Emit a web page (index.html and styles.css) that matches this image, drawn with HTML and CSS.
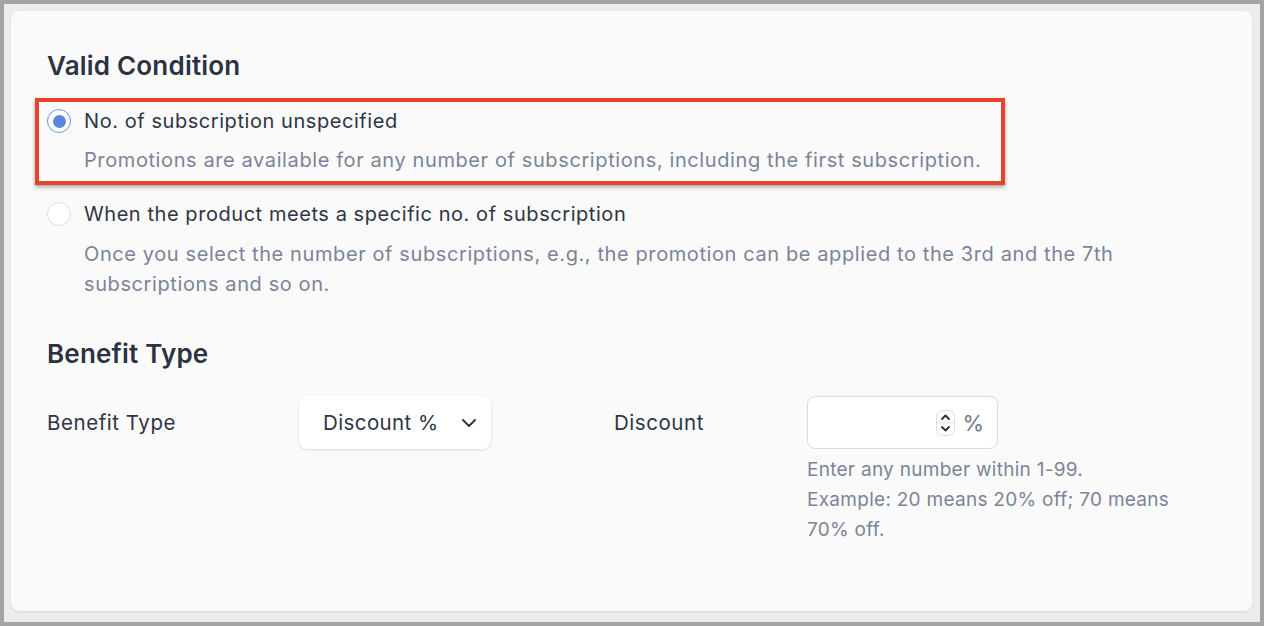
FILE: index.html
```html
<!DOCTYPE html>
<html lang="en">
<head>
<meta charset="utf-8">
<title>Promotion settings</title>
<link rel="stylesheet" href="styles.css">
</head>
<body>
<div class="frame">
  <div class="card">
    <h2 class="section-title">Valid Condition</h2>

    <div class="option option-first">
      <div class="option-row">
        <span class="radio radio-checked"><span class="radio-dot"></span></span>
        <span class="option-label">No. of subscription unspecified</span>
      </div>
      <p class="option-desc">Promotions are available for any number of subscriptions, including the first subscription.</p>
      <div class="highlight"></div>
    </div>

    <div class="option option-second">
      <div class="option-row">
        <span class="radio"></span>
        <span class="option-label">When the product meets a specific no. of subscription</span>
      </div>
      <p class="option-desc">Once you select the number of subscriptions, e.g., the promotion can be applied to the 3rd and the 7th subscriptions and so on.</p>
    </div>

    <h2 class="section-title section-title-2">Benefit Type</h2>

    <div class="benefit-row">
      <div class="field-label label-col">Benefit Type</div>
      <div class="select">
        <span class="select-value">Discount %</span>
        <svg class="chevron" width="14" height="8" viewBox="0 0 14 8"><path d="M1 1l6 6 6-6" fill="none" stroke="#343a4a" stroke-width="2" stroke-linecap="round" stroke-linejoin="round"/></svg>
      </div>
      <div class="field-label discount-label">Discount</div>
      <div class="discount-col">
        <div class="number-input">
          <input class="number-field" type="text" aria-label="Discount">
          <span class="spinner">
            <svg width="19" height="26" viewBox="0 0 19 26">
              <rect x="0.5" y="0.5" width="18" height="25" rx="6" fill="#fff" stroke="#d9dde4"/>
              <line x1="1" y1="13" x2="18" y2="13" stroke="#e2e5ea"/>
              <path d="M6 9l3.5-3.5L13 9" fill="none" stroke="#2a2f3b" stroke-width="1.8" stroke-linecap="round" stroke-linejoin="round"/>
              <path d="M6 17l3.5 3.5L13 17" fill="none" stroke="#2a2f3b" stroke-width="1.8" stroke-linecap="round" stroke-linejoin="round"/>
            </svg>
          </span>
          <span class="suffix">%</span>
        </div>
        <p class="help">Enter any number within 1-99.<br>Example: 20 means 20% off; 70 means 70% off.</p>
      </div>
    </div>
  </div>
</div>
</body>
</html>
```

FILE: styles.css
```css
* { box-sizing: border-box; }

html, body {
  margin: 0;
  padding: 0;
}

body {
  background: #a4a4a4;
  padding: 4px;
  font-family: "Inter", "Noto Sans", "Liberation Sans", sans-serif;
  color: #2f3545;
}

.frame {
  background: #ececef;
  height: 618px;
  padding: 7px 8px 11px 7px;
}

.card {
  background: #fafafa;
  border-radius: 8px;
  height: 600px;
  box-shadow: 0 1px 2px rgba(0, 0, 0, 0.08);
  padding: 37px 36px 0 36px;
}

.section-title {
  margin: 0;
  font-size: 26px;
  line-height: 36px;
  font-weight: 600;
  color: #2c3242;
  letter-spacing: 0.2px;
}

.option {
  position: relative;
}

.option-first {
  margin-top: 22px;
}

.option-second {
  margin-top: 24px;
}

.option-row {
  display: flex;
  align-items: center;
  height: 30px;
}

.radio {
  width: 24px;
  height: 24px;
  border-radius: 50%;
  border: 1px solid #d9dee7;
  background: #fff;
  display: flex;
  align-items: center;
  justify-content: center;
  flex: none;
}

.radio-checked {
  border-color: #6a93e8;
}

.radio-dot {
  width: 13px;
  height: 13px;
  border-radius: 50%;
  background: #5a86e0;
}

.option-label {
  margin-left: 13px;
  font-size: 20px;
  line-height: 30px;
  color: #2f3545;
  letter-spacing: 0.56px;
}

.option-desc {
  margin: 9px 0 0 37px;
  font-size: 20px;
  line-height: 30px;
  color: #7b8499;
  letter-spacing: 0.6px;
}

.option-second .option-desc {
  margin-top: 10px;
}

.highlight {
  position: absolute;
  left: -12px;
  top: -8px;
  width: 970px;
  height: 87px;
  border: 4px solid #e5432c;
  box-shadow: 0 2px 4px rgba(0, 0, 0, 0.35);
  pointer-events: none;
}

.section-title-2 {
  margin-top: 37px;
}

.benefit-row {
  display: flex;
  align-items: flex-start;
  margin-top: 24px;
}

.field-label {
  font-size: 20.5px;
  line-height: 53px;
  color: #2f3545;
  letter-spacing: 0.55px;
}

.label-col {
  width: 252px;
  flex: none;
}

.select {
  width: 192px;
  height: 53px;
  flex: none;
  background: #fff;
  border-radius: 8px;
  box-shadow: 0 1px 3px rgba(0, 0, 0, 0.12), 0 0 1px rgba(0, 0, 0, 0.06);
  display: flex;
  align-items: center;
  padding: 0 15px 0 24px;
}

.select-value {
  flex: 1;
  font-size: 20.5px;
  color: #2f3545;
  letter-spacing: 0.4px;
  white-space: nowrap;
}

.chevron {
  flex: none;
}

.discount-label {
  margin-left: 123px;
  width: 193px;
  flex: none;
}

.discount-col {
  width: 380px;
  flex: none;
}

.number-input {
  width: 191px;
  height: 53px;
  background: #fff;
  border: 1px solid #d6dce6;
  border-radius: 8px;
  display: flex;
  align-items: center;
  padding: 0 13px 0 10px;
}

.number-field {
  flex: 1;
  min-width: 0;
  border: 0;
  outline: none;
  background: transparent;
  font: inherit;
  font-size: 18px;
}

.spinner {
  display: flex;
  flex: none;
  margin-right: 7px;
}

.suffix {
  font-size: 22px;
  color: #707a90;
}

.help {
  margin: 6px 0 0 0;
  font-size: 19px;
  line-height: 30px;
  color: #7b8499;
  width: 368px;
  letter-spacing: 0.28px;
}
```
